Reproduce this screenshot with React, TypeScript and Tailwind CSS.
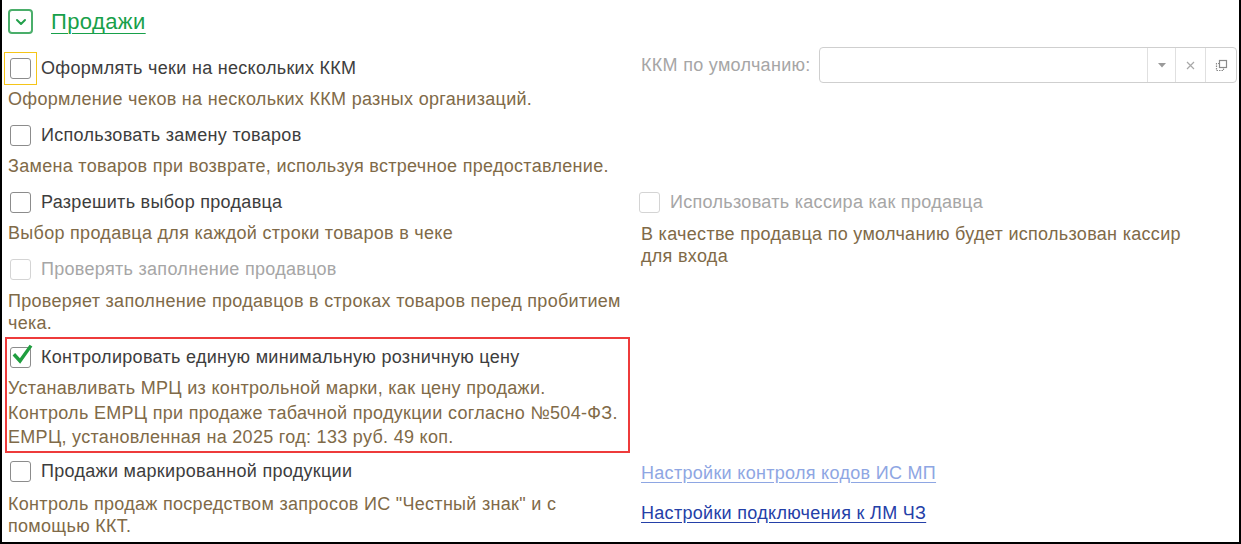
import React from "react";

const font = { fontFamily: '"Liberation Sans", Arial, sans-serif' };

function Box({ checked = false, disabled = false, focused = false }: { checked?: boolean; disabled?: boolean; focused?: boolean }) {
  const inner = (
    <div
      className={
        "relative w-[21px] h-[21px] rounded-[3px] border bg-white " +
        (disabled ? "border-[#d4d4d4]" : "border-[#8c8c8c]")
      }
    >
      {checked && (
        <svg className="absolute left-[1px] top-[-4px]" width="22" height="22" viewBox="0 0 22 22">
          <path d="M3 11.5 L8 17 L18 3" fill="none" stroke="#1f9e3f" strokeWidth="3.4" strokeLinecap="square" strokeLinejoin="miter" />
        </svg>
      )}
    </div>
  );
  if (focused) {
    return (
      <div className="w-[33px] h-[33px] border border-[#f5c518] flex items-center justify-center shrink-0 ml-[-4px] mr-[3px]">
        {inner}
      </div>
    );
  }
  return <div className="w-[32px] h-[32px] flex items-center justify-start shrink-0 pl-[2px]">{inner}</div>;
}

function CheckRow({ label, checked, disabled, focused }: { label: string; checked?: boolean; disabled?: boolean; focused?: boolean }) {
  return (
    <div className="flex items-center h-[32px]">
      <Box checked={checked} disabled={disabled} focused={focused} />
      <span className={"text-[18px] tracking-[0.3px] ml-[1px] whitespace-nowrap " + (disabled ? "text-[#a6a6a6]" : "text-[#3d3d3d]")}>{label}</span>
    </div>
  );
}

function Desc({ children, lh = "leading-[22px]" }: { children: React.ReactNode; lh?: string }) {
  return <div className={"text-[18px] tracking-[0.3px] text-[#806a48] whitespace-nowrap " + lh}>{children}</div>;
}

export default function App() {
  return (
    <div style={font} className="w-[1241px] h-[544px] bg-white border-r-2 border-b-2 border-l-2 border-black relative overflow-hidden">
      {/* Header */}
      <div className="flex items-center h-[42px] pl-[6px] pt-[1px]">
        <div className="w-[25px] h-[25px] rounded-[4px] border-2 border-[#4aae6a] flex items-center justify-center">
          <svg width="12" height="8" viewBox="0 0 12 8">
            <path d="M2 2 L6 6 L10 2" fill="none" stroke="#22a04b" strokeWidth="2" strokeLinecap="round" strokeLinejoin="round" />
          </svg>
        </div>
        <span className="ml-[18px] text-[22px] tracking-[0.4px] text-[#17a04a] underline underline-offset-[4px] decoration-1">Продажи</span>
      </div>

      <div className="flex">
        {/* Left column */}
        <div className="w-[633px] pl-[6px] shrink-0">
          <div className="pt-[10px]">
            <CheckRow label="Оформлять чеки на нескольких ККМ" focused />
            <div className="mt-[4px]">
              <Desc>Оформление чеков на нескольких ККМ разных организаций.</Desc>
            </div>
          </div>
          <div className="mt-[9px]">
            <CheckRow label="Использовать замену товаров" />
            <div className="mt-[4px]">
              <Desc>Замена товаров при возврате, используя встречное предоставление.</Desc>
            </div>
          </div>
          <div className="mt-[9px]">
            <CheckRow label="Разрешить выбор продавца" />
            <div className="mt-[4px]">
              <Desc>Выбор продавца для каждой строки товаров в чеке</Desc>
            </div>
          </div>
          <div className="mt-[9px]">
            <CheckRow label="Проверять заполнение продавцов" disabled />
            <div className="mt-[5px]">
              <Desc>
                Проверяет заполнение продавцов в строках товаров перед пробитием
                <br />
                чека.
              </Desc>
            </div>
          </div>
          <div className="mt-[3px] ml-[-3px] w-[625px] border-2 border-[#ee3b3b] pl-[1px] pt-[2px] pb-[1px]">
            <CheckRow label="Контролировать единую минимальную розничную цену" checked />
            <div className="mt-[3px]">
              <Desc lh="leading-[24.5px]">
                Устанавливать МРЦ из контрольной марки, как цену продажи.
                <br />
                Контроль ЕМРЦ при продаже табачной продукции согласно №504-ФЗ.
                <br />
                ЕМРЦ, установленная на 2025 год: 133 руб. 49 коп.
              </Desc>
            </div>
          </div>
          <div className="mt-[3px]">
            <CheckRow label="Продажи маркированной продукции" />
            <div className="mt-[5px]">
              <Desc>
                Контроль продаж посредством запросов ИС "Честный знак" и с
                <br />
                помощью ККТ.
              </Desc>
            </div>
          </div>
        </div>

        {/* Right column */}
        <div className="flex-1 pl-[6px] pr-[2px]">
          <div className="flex items-center mt-[5px] h-[36px]">
            <span className="text-[18px] tracking-[0.3px] text-[#a6a6a6] whitespace-nowrap">ККМ по умолчанию:</span>
            <div className="ml-[8px] flex-1 h-[36px] border border-[#cfcfcf] rounded-[4px] flex">
              <div className="flex-1" />
              <div className="w-[28px] border-l border-[#e0e0e0] flex items-center justify-center">
                <svg width="8" height="5" viewBox="0 0 8 5">
                  <path d="M0 0 L8 0 L4 4.5 Z" fill="#9a9a9a" />
                </svg>
              </div>
              <div className="w-[30px] border-l border-[#e0e0e0] flex items-center justify-center">
                <svg width="9" height="9" viewBox="0 0 9 9">
                  <path d="M1 1 L8 8 M8 1 L1 8" stroke="#a8a8a8" strokeWidth="1.2" />
                </svg>
              </div>
              <div className="w-[31px] border-l border-[#e0e0e0] flex items-center justify-center">
                <svg width="13" height="13" viewBox="0 0 13 13">
                  <rect x="4.5" y="1.5" width="7" height="7" fill="none" stroke="#8a8a8a" strokeWidth="1.2" />
                  <path d="M4.5 4.5 H1.5 V11.5 H8.5 V8.5" fill="none" stroke="#8a8a8a" strokeWidth="1.2" strokeDasharray="1.5 1" />
                </svg>
              </div>
            </div>
          </div>

          <div className="mt-[103px] ml-[-4px]">
            <CheckRow label="Использовать кассира как продавца" disabled />
            <div className="mt-[5px] ml-[4px]">
              <Desc>
                В качестве продавца по умолчанию будет использован кассир
                <br />
                для входа
              </Desc>
            </div>
          </div>

          <div className="mt-[195px] text-[18px] tracking-[0.3px] leading-[22px]">
            <div className="text-[#8ea6e3] underline underline-offset-[3px]">Настройки контроля кодов ИС МП</div>
            <div className="mt-[18px] text-[#2440a8] underline underline-offset-[3px]">Настройки подключения к ЛМ ЧЗ</div>
          </div>
        </div>
      </div>
    </div>
  );
}
